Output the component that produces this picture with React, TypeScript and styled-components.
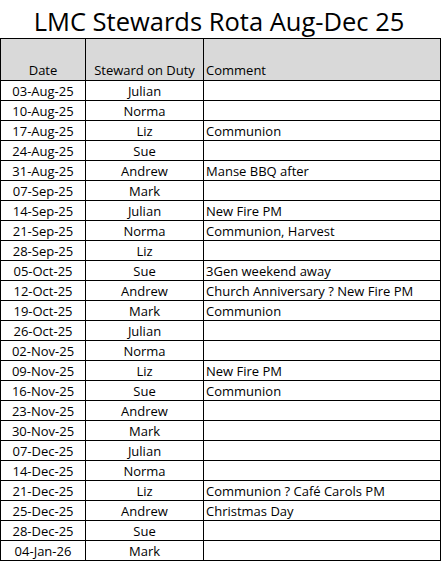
import React from 'react';
import styled, { createGlobalStyle } from 'styled-components';

interface Duty {
    date: string;
    steward: string;
    comment?: string;
}

const rota: Array<Duty> = [
    { date: '03-Aug-25', steward: 'Julian' },
    { date: '10-Aug-25', steward: 'Norma' },
    { date: '17-Aug-25', steward: 'Liz', comment: 'Communion' },
    { date: '24-Aug-25', steward: 'Sue' },
    { date: '31-Aug-25', steward: 'Andrew', comment: 'Manse BBQ after' },
    { date: '07-Sep-25', steward: 'Mark' },
    { date: '14-Sep-25', steward: 'Julian', comment: 'New Fire PM' },
    { date: '21-Sep-25', steward: 'Norma', comment: 'Communion, Harvest' },
    { date: '28-Sep-25', steward: 'Liz' },
    { date: '05-Oct-25', steward: 'Sue', comment: '3Gen weekend away' },
    { date: '12-Oct-25', steward: 'Andrew', comment: 'Church Anniversary ? New Fire PM' },
    { date: '19-Oct-25', steward: 'Mark', comment: 'Communion' },
    { date: '26-Oct-25', steward: 'Julian' },
    { date: '02-Nov-25', steward: 'Norma' },
    { date: '09-Nov-25', steward: 'Liz', comment: 'New Fire PM' },
    { date: '16-Nov-25', steward: 'Sue', comment: 'Communion' },
    { date: '23-Nov-25', steward: 'Andrew' },
    { date: '30-Nov-25', steward: 'Mark' },
    { date: '07-Dec-25', steward: 'Julian' },
    { date: '14-Dec-25', steward: 'Norma' },
    { date: '21-Dec-25', steward: 'Liz', comment: 'Communion ? Café Carols PM' },
    { date: '25-Dec-25', steward: 'Andrew', comment: 'Christmas Day' },
    { date: '28-Dec-25', steward: 'Sue' },
    { date: '04-Jan-26', steward: 'Mark' },
];

const GlobalStyle = createGlobalStyle`
    body{
        margin:0;
        background:#fff;
        font-family:"Open Sans", "Liberation Sans", sans-serif;
        color:#000;
    }
`;

const App = () => {
    return (
        <Sheet>
            <GlobalStyle />
            <Title>LMC Stewards Rota Aug-Dec 25</Title>
            <Table>
                <colgroup>
                    <col style={{ width: 85 }} />
                    <col style={{ width: 118 }} />
                    <col />
                </colgroup>
                <thead>
                    <tr>
                        <HeadCell align="center">Date</HeadCell>
                        <HeadCell align="center">Steward on Duty</HeadCell>
                        <HeadCell align="left">Comment</HeadCell>
                    </tr>
                </thead>
                <tbody>
                    {rota.map((d) => (
                        <tr key={d.date}>
                            <Cell align="center">{d.date}</Cell>
                            <Cell align="center">{d.steward}</Cell>
                            <Cell align="left">{d.comment}</Cell>
                        </tr>
                    ))}
                </tbody>
            </Table>
        </Sheet>
    );
};

const Sheet = styled.div`
    width:441px;
    display:flex;
    flex-direction:column;
`;

const Title = styled.div`
    height:38px;
    display:flex;
    align-items:flex-end;
    justify-content:center;
    font-size:25.5px;
    line-height:34px;
    padding-right:3px;
    box-sizing:border-box;
`;

const Table = styled.table`
    width:441px;
    border-collapse:collapse;
    table-layout:fixed;
    font-size:13px;
`;

const HeadCell = styled.th<{ align: string }>`
    height:40px;
    padding:0 2px 1px;
    background:#d9d9d9;
    border:1px solid #000;
    font-weight:normal;
    text-align:${(props) => props.align};
    vertical-align:bottom;
    line-height:18px;
    white-space:nowrap;
`;

const Cell = styled.td<{ align: string }>`
    height:19px;
    padding:0 2px;
    border:1px solid #000;
    text-align:${(props) => props.align};
    vertical-align:bottom;
    line-height:18px;
    white-space:nowrap;
    overflow:hidden;
`;

export default App;
